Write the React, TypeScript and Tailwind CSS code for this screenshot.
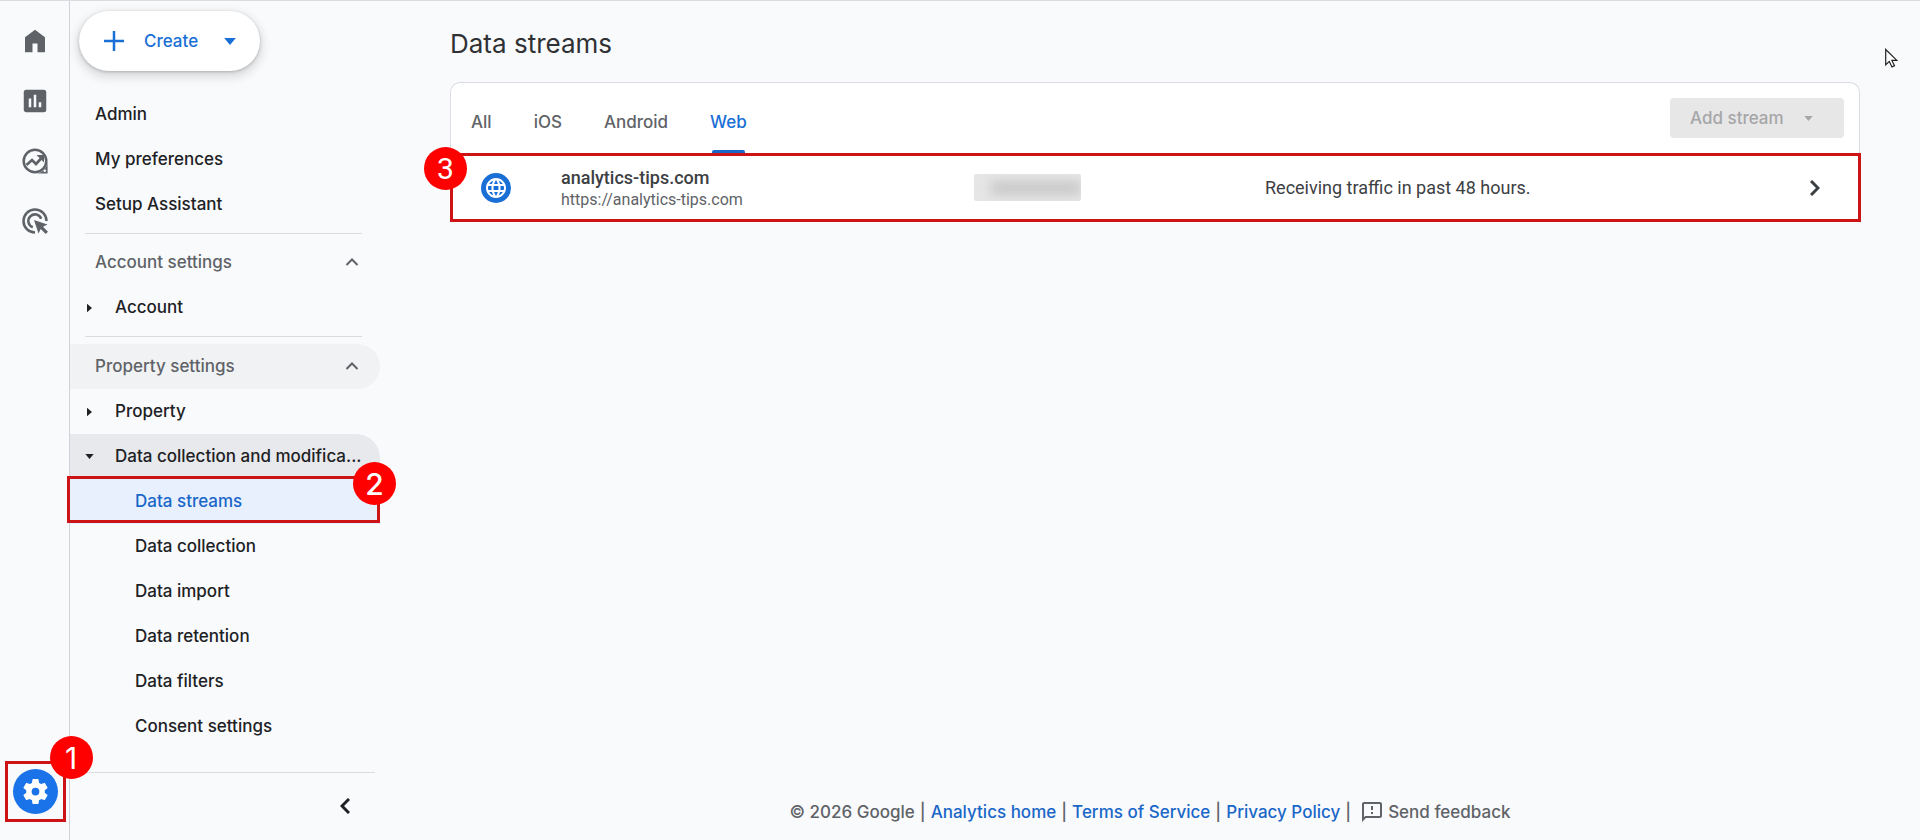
import { useState } from 'react'
import type { ReactNode } from 'react'
import clsx from 'clsx'

type NavItem = {
  label: string
  selected?: boolean
}

type Stream = {
  id: string
  name: string
  url: string
  status: string
}

const topLinks: NavItem[] = [
  { label: 'Admin' },
  { label: 'My preferences' },
  { label: 'Setup Assistant' },
]

const dataLinks: NavItem[] = [
  { label: 'Data streams', selected: true },
  { label: 'Data collection' },
  { label: 'Data import' },
  { label: 'Data retention' },
  { label: 'Data filters' },
  { label: 'Consent settings' },
]

const tabs = ['All', 'iOS', 'Android', 'Web']

const streams: Stream[] = [
  {
    id: 'web-1',
    name: 'analytics-tips.com',
    url: 'https://analytics-tips.com',
    status: 'Receiving traffic in past 48 hours.',
  },
]

const footerLinks = ['Analytics home', 'Terms of Service', 'Privacy Policy']

function Icon({ className, children }: { className?: string; children: ReactNode }) {
  return (
    <svg viewBox="0 0 24 24" fill="currentColor" className={className} aria-hidden="true">
      {children}
    </svg>
  )
}

function CaretDown({ className }: { className?: string }) {
  return (
    <svg viewBox="0 0 10 6" fill="currentColor" className={className} aria-hidden="true">
      <path d="M0 0h10L5 6z" />
    </svg>
  )
}

function CaretRight({ className }: { className?: string }) {
  return (
    <svg viewBox="0 0 6 10" fill="currentColor" className={className} aria-hidden="true">
      <path d="M0 0l6 5-6 5z" />
    </svg>
  )
}

// Numbered step marker, sits on a corner of a highlight
function StepBadge({ step, className }: { step: number; className: string }) {
  return (
    <span
      className={clsx(
        'absolute z-10 flex size-[43px] items-center justify-center rounded-full bg-[#fe0000] text-3xl leading-none text-white',
        className
      )}
    >
      {step}
    </span>
  )
}

function Rail() {
  return (
    <nav
      aria-label="Sections"
      className="flex w-[70px] shrink-0 flex-col items-center border-r border-[#d0d3d8] pt-[25px] pb-[18px] text-[#5f6368]"
    >
      <div className="flex flex-col gap-[30px]">
        <a href="#home" aria-label="Home">
          <Icon className="size-[30px]">
            <path d="M4 21V9l8-6 8 6v12h-6v-7h-4v7z" />
          </Icon>
        </a>
        <a href="#reports" aria-label="Reports">
          <Icon className="size-[30px]">
            <path d="M19 3H5a2 2 0 0 0-2 2v14c0 1.100.9 2 2 2h14a2 2 0 0 0 2-2V5a2 2 0 0 0-2-2zM9 17H7v-7h2zm4 0h-2V7h2zm4 0h-2v-4h2z" />
          </Icon>
        </a>
        <a href="#explore" aria-label="Explore">
          <svg viewBox="0 0 30 30" fill="none" stroke="currentColor" className="size-[30px]" aria-hidden="true">
            <circle cx="15" cy="15" r="11.300" strokeWidth="2.500" />
            <path d="M27.600 15v12.600H15a12.600 12.600 0 0 0 12.600-12.600z" fill="currentColor" stroke="none" />
            <path d="M6.500 19l5.500-5 4 4 6-6.500" strokeWidth="2.600" />
            <path d="M16.500 9h7.500v7.500z" fill="currentColor" stroke="none" />
            <circle cx="24.800" cy="24.800" r="1.300" fill="#f9fafc" stroke="none" />
          </svg>
        </a>
        <a href="#advertising" aria-label="Advertising">
          <svg viewBox="0 0 30 30" fill="none" stroke="currentColor" className="size-[30px]" aria-hidden="true">
            <path d="M15 26.500A11.500 11.500 0 1 1 26.500 15" strokeWidth="2.600" />
            <path d="M12.800 21.200A6.600 6.600 0 1 1 21.200 12.800" strokeWidth="2.600" />
            <path d="M14 14l13.500 4.500-4.500 2.200 5 5-2.300 2.300-5-5-2.200 4.500z" fill="currentColor" stroke="none" />
          </svg>
        </a>
      </div>

      <div className="relative ml-px mt-auto border-[3px] border-[#cc1417] p-[5px]">
        <a
          href="#admin"
          aria-label="Admin"
          className="flex size-[45px] items-center justify-center rounded-full bg-[#1a73e8] text-white"
        >
          <Icon className="size-[31px]">
            <path d="M19.140 12.940c.04-.3.060-.61.060-.94 0-.32-.02-.64-.07-.94l2.030-1.580a.49.49 0 0 0 .12-.61l-1.920-3.320a.488.488 0 0 0-.59-.22l-2.390.96c-.5-.38-1.030-.7-1.620-.94l-.36-2.540a.484.484 0 0 0-.48-.41h-3.840c-.24 0-.43.17-.47.41l-.36 2.540c-.59.24-1.130.57-1.620.94l-2.390-.96c-.22-.08-.47 0-.59.22L2.740 8.870c-.12.21-.08.47.12.61l2.030 1.580c-.05.3-.09.63-.09.94s.02.64.07.94l-2.030 1.580a.49.49 0 0 0-.12.61l1.920 3.320c.12.22.37.29.59.22l2.390-.96c.5.38 1.030.7 1.620.94l.36 2.540c.05.24.24.41.48.41h3.840c.24 0 .44-.17.47-.41l.36-2.540c.59-.24 1.130-.56 1.620-.94l2.390.96c.22.08.47 0 .59-.22l1.920-3.320a.49.49 0 0 0-.12-.61zM12 15a3 3 0 1 1 0-6 3 3 0 0 1 0 6z" />
          </Icon>
        </a>
        <StepBadge step={1} className="-top-7 -right-[30px]" />
      </div>
    </nav>
  )
}

function GroupHeader({ label, active }: { label: string; active?: boolean }) {
  return (
    <button
      type="button"
      aria-expanded="true"
      className={clsx(
        'flex h-[45px] w-full items-center justify-between rounded-r-full pr-5 pl-[25px] text-[#5f6368]',
        active && 'bg-[#f1f2f4]'
      )}
    >
      {label}
      <svg viewBox="0 0 14 10" fill="none" stroke="currentColor" strokeWidth="2" className="mr-px h-2.5 w-3.5" aria-hidden="true">
        <path d="M1.500 7L7 1.500 12.500 7" />
      </svg>
    </button>
  )
}

function TreeNode({ label, open }: { label: string; open?: boolean }) {
  return (
    <button
      type="button"
      aria-expanded={!!open}
      className={clsx(
        'flex h-[45px] w-full items-center rounded-tr-3xl pl-[15px] text-left whitespace-nowrap',
        open && 'bg-[#e8e9ec]'
      )}
    >
      <span className="flex w-[30px] shrink-0">
        {open ? <CaretDown className="h-[5px] w-[9px]" /> : <CaretRight className="ml-0.5 h-2.5 w-[5px]" />}
      </span>
      {label}
    </button>
  )
}

function Sidebar() {
  return (
    <aside className="flex w-[310px] shrink-0 flex-col pt-2.5 text-[17px] font-medium text-[#202124]">
      <button
        type="button"
        className="ml-[9px] flex h-[60px] w-[181px] items-center rounded-full bg-white pl-[25px] text-[#1a6fd6] shadow-[0_1px_3px_rgba(60,64,67,0.3),0_4px_8px_3px_rgba(60,64,67,0.15)]"
      >
        <svg viewBox="0 0 20 20" stroke="currentColor" strokeWidth="2.500" className="size-5" aria-hidden="true">
          <path d="M10 0v20M0 10h20" />
        </svg>
        <span className="ml-5 pt-0.5">Create</span>
        <CaretDown className="ml-[26px] h-[7px] w-3" />
      </button>

      <nav aria-label="Admin" className="mt-[21px]">
        {topLinks.map(it => (
          <a key={it.label} href="#" className="flex h-[45px] items-center pl-[25px]">
            {it.label}
          </a>
        ))}

        <hr className="mt-1.5 mr-[18px] mb-1.5 ml-[15px] border-[#dadce0]" />
        <GroupHeader label="Account settings" />
        <TreeNode label="Account" />

        <hr className="mt-1.5 mr-[18px] mb-[7px] ml-[15px] border-[#dadce0]" />
        <GroupHeader label="Property settings" active />
        <TreeNode label="Property" />
        <TreeNode label="Data collection and modifica..." open />

        <ul>
          {dataLinks.map(it => (
            <li key={it.label} className="relative">
              <a
                href="#"
                aria-current={it.selected ? 'page' : undefined}
                className={clsx(
                  'flex h-[45px] items-center pl-[65px]',
                  it.selected && 'bg-[#e8f0fe] text-[#1967c8]'
                )}
              >
                {it.label}
              </a>
              {it.selected && (
                <>
                  <span className="pointer-events-none absolute -top-[3px] right-0 bottom-px -left-[3px] border-[3px] border-[#cc1417]" />
                  <StepBadge step={2} className="-top-[17px] -right-4" />
                </>
              )}
            </li>
          ))}
        </ul>
      </nav>

      <div className="mt-auto mr-[5px] flex h-[68px] justify-end border-t border-[#dadce0] pt-[25px] pr-[25px]">
        <button type="button" aria-label="Collapse menu" className="h-4 w-2.5">
          <svg viewBox="0 0 10 16" fill="none" stroke="currentColor" strokeWidth="3" className="h-4 w-2.5" aria-hidden="true">
            <path d="M9 1L2 8l7 7" />
          </svg>
        </button>
      </div>
    </aside>
  )
}

function StreamRow({ stream }: { stream: Stream }) {
  return (
    <li className="relative -mr-0.5 -ml-px grid h-[69px] grid-cols-[80px_413fr_291fr_545fr_10px] items-center border-[3px] border-[#cc1417] pr-[38px] pl-7 font-['Roboto',sans-serif]">
      <span className="flex size-[30px] items-center justify-center rounded-full bg-[#1a6fd6] text-white">
        <Icon className="size-6">
          <path d="M11.990 2C6.470 2 2 6.480 2 12s4.470 10 9.990 10C17.520 22 22 17.520 22 12S17.520 2 11.990 2zm6.930 6h-2.950a15.650 15.650 0 0 0-1.380-3.560A8.030 8.030 0 0 1 18.920 8zM12 4.040c.83 1.200 1.480 2.530 1.910 3.960h-3.820c.43-1.430 1.080-2.760 1.910-3.960zM4.260 14C4.100 13.360 4 12.690 4 12s.1-1.360.26-2h3.380c-.08.66-.14 1.320-.14 2s.06 1.340.14 2zm.82 2h2.950c.32 1.250.78 2.450 1.380 3.560A7.987 7.987 0 0 1 5.080 16zm2.950-8H5.080a7.987 7.987 0 0 1 4.330-3.560A15.650 15.650 0 0 0 8.030 8zM12 19.960c-.83-1.200-1.480-2.530-1.910-3.960h3.820c-.43 1.430-1.080 2.760-1.910 3.960zM14.340 14H9.660c-.09-.66-.16-1.320-.16-2s.07-1.350.16-2h4.680c.09.65.16 1.320.16 2s-.07 1.340-.16 2zm.25 5.560c.6-1.110 1.060-2.310 1.380-3.560h2.950a8.030 8.030 0 0 1-4.330 3.560zM16.360 14c.08-.66.14-1.320.14-2s-.06-1.340-.14-2h3.380c.16.64.26 1.310.26 2s-.1 1.360-.26 2z" />
        </Icon>
      </span>
      <a href="#" className="flex flex-col">
        <span className="text-lg leading-6 font-medium text-[#3c4043]">{stream.name}</span>
        <span className="text-base leading-5 text-[#5f6368]">{stream.url}</span>
      </a>
      {/* stream id is masked */}
      <span className="flex h-[27px] w-[107px] items-center justify-end overflow-hidden rounded-xs bg-[#e6e6e6]">
        <span className="h-3 w-[90px] bg-[#c4c4c4] blur-[6px]" />
      </span>
      <span className="text-lg text-[#3c4043]">{stream.status}</span>
      <svg viewBox="0 0 10 16" fill="none" stroke="#3c4043" strokeWidth="3" className="h-4 w-2.5" aria-hidden="true">
        <path d="M1 1l7 7-7 7" />
      </svg>
      <StepBadge step={3} className="-top-[9px] -left-[29px]" />
    </li>
  )
}

function Footer() {
  return (
    <footer className="mt-auto flex items-center justify-center gap-[5px] pb-4 text-[17px] leading-6 font-medium text-[#5f6368]">
      <span>© 2026 Google</span>
      {footerLinks.map(label => (
        <span key={label} className="flex gap-[5px]">
          <span>|</span>
          <a href="#" className="text-[#1967c8]">
            {label}
          </a>
        </span>
      ))}
      <span>|</span>
      <button type="button" className="ml-1 flex items-center gap-1">
        <Icon className="size-6">
          <path d="M20 2H4c-1.100 0-1.990.9-1.990 2L2 22l4-4h14c1.100 0 2-.9 2-2V4c0-1.100-.9-2-2-2zm0 14H5.170L4 17.170V4h16zM11 12h2v2h-2zm0-6h2v4h-2z" />
        </Icon>
        Send feedback
      </button>
    </footer>
  )
}

export default function App() {
  const [tab, setTab] = useState('Web')

  return (
    <div className="relative flex min-h-screen border-t border-[#dadce0] bg-[#f9fafc] font-['Inter','Noto_Sans',sans-serif]">
      <Rail />
      <Sidebar />

      <main className="flex min-w-0 flex-1 flex-col pt-[27px]">
        <h1 className="pl-[70px] text-[26px] leading-8 text-[#303134]">Data streams</h1>

        <section className="mt-[22px] mr-[60px] ml-[70px] rounded-t-[10px] border border-b-0 border-[#dadce0] bg-white">
          <div className="flex h-[70px] items-start justify-between pr-[15px] pl-5">
            <div role="tablist" className="flex gap-[42px] text-[17px] font-medium text-[#5f6368]">
              {tabs.map(name => (
                <button
                  key={name}
                  type="button"
                  role="tab"
                  aria-selected={tab === name}
                  onClick={() => setTab(name)}
                  className={clsx('relative h-[70px] pt-2.5', tab === name && 'text-[#1a6fd6]')}
                >
                  {name}
                  {tab === name && (
                    <span className="absolute inset-x-0.5 bottom-0 h-[3px] rounded-t-xs bg-[#1967c8]" />
                  )}
                </button>
              ))}
            </div>
            <button
              type="button"
              disabled
              className="mt-[15px] flex h-10 w-[174px] items-center rounded-sm bg-[#e7e7e8] pt-px pl-5 text-[17px] font-medium text-[#a6a6a8]"
            >
              Add stream
              <CaretDown className="ml-5 h-[5px] w-[9px]" />
            </button>
          </div>

          <ul>
            {streams.map(s => (
              <StreamRow key={s.id} stream={s} />
            ))}
          </ul>
        </section>

        <Footer />
      </main>

      {/* mouse pointer */}
      <svg viewBox="0 0 13 20" className="pointer-events-none absolute top-[47px] right-[22px] h-5 w-[13px]" aria-hidden="true">
        <path d="M.7 1.500v15.300l3.600-3.400 2.700 5.500 2.500-1.200-2.600-5.300h5z" fill="#fff" stroke="#222" strokeWidth="1.200" />
      </svg>
    </div>
  )
}
